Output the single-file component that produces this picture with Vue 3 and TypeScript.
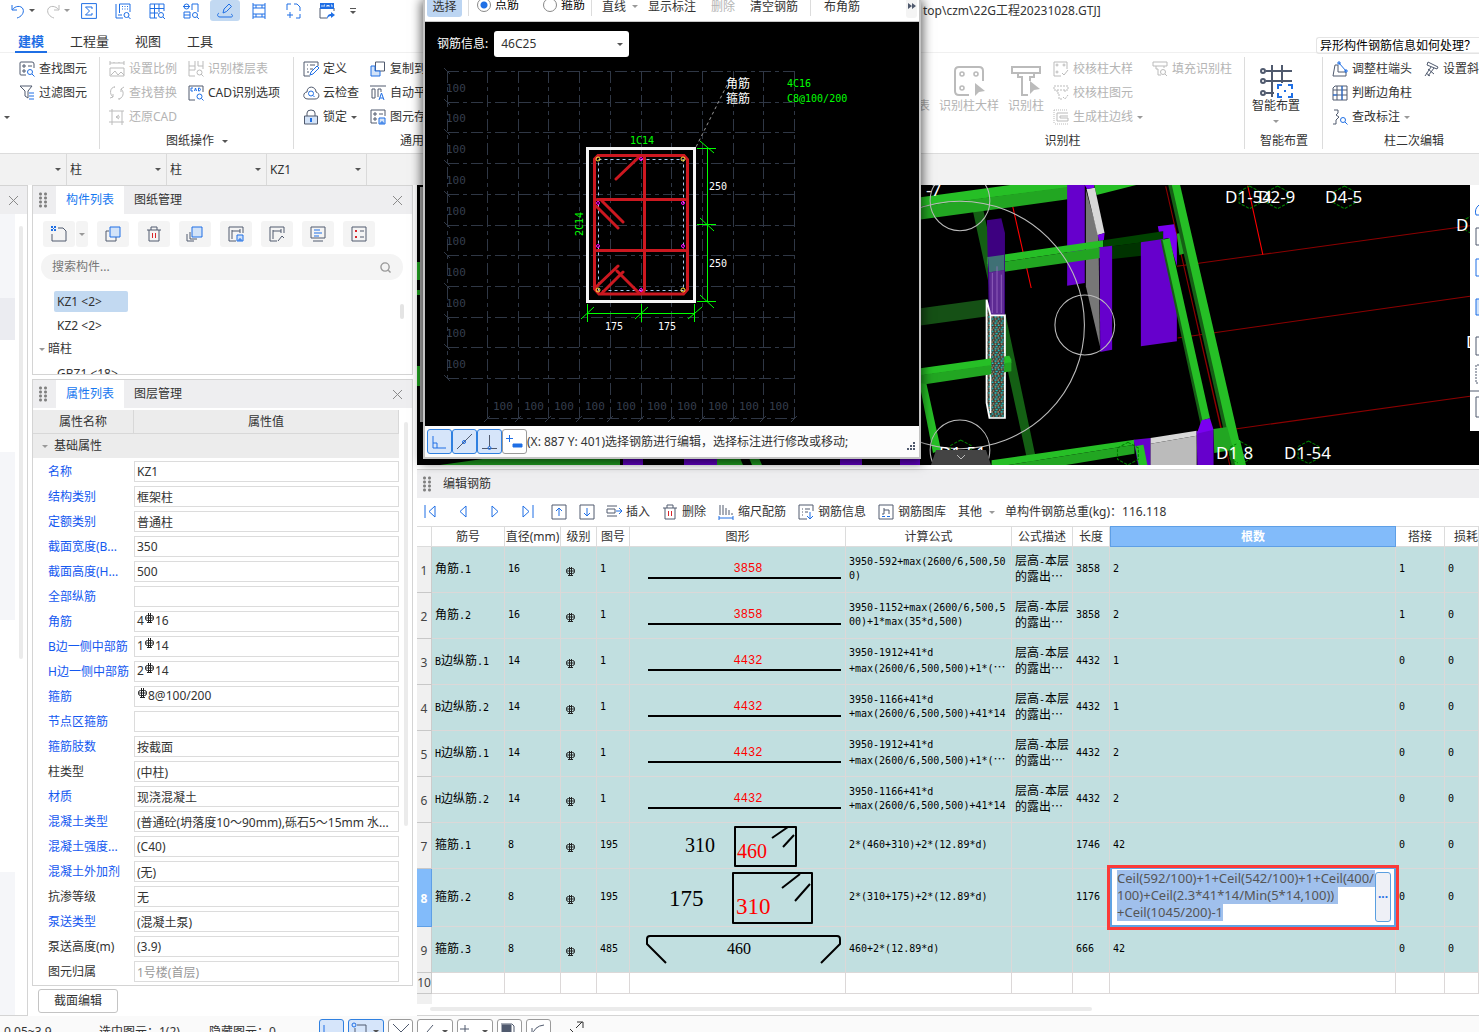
<script setup lang="ts">
import { onMounted, ref } from 'vue'

const icons: Record<string, string> = {
  undo: '<path class="a" d="M2 2v5h5M2.500 6.500C5 3 11 2 13 6c1.500 4-2 8-6 9"/>',
  redo: '<path d="M14 2v5h-5M13.500 6.500C11 3 5 2 3 6c-1.500 4 2 8 6 9"/>',
  sum: '<path class="a" d="M.6.6h14.800v14.800H.6zM11 6V4H4.500l4 4-4 4H11v-2"/>',
  calc: '<path class="a" d="M4.500 1h10.500v8M1 1v14h7M4.500 1v9M3 12h4M7 3.500h1m1.500 0h1m1.500 0h1M7 6h1m1.500 0h1m1.500 0h1"/><circle class="a" cx="11.500" cy="12" r="2.500"/><path class="a" d="M13.500 14l2 2"/>',
  grid: '<path class="a" d="M8 15H1V1h14v7M1 5.500h14M1 10h8M5.500 1v14M10 1v8"/><circle class="a" cx="12" cy="12" r="2.500"/><path class="a" d="M14 14l2 2"/>',
  puzzle: '<circle class="a" cx="3.500" cy="3.500" r="2.500"/><path class="a" d="M9 1h6v8M9 1v6M0 3.500h7M1 9h6v6H1zM1 12h6"/><circle class="a" cx="12" cy="12" r="2.500"/><path class="a" d="M14 14l2 2"/>',
  pen: '<path class="a" d="M6 10l1-4 5-5 2.500 2.500-5 5zM2 10c-2 1-2 4 1 4h11c2 0 2-2 0-3"/>',
  span: '<path class="a" d="M2 0v16M14 0v16M2 2h12M2 5h12M2 11h12M2 14h12M5 2v3m0 6v3M11 2v3m0 6v3"/>',
  newpage: '<path class="a" d="M2 7V1h4M9 1h3l3 3v4M15 11v4h-4M5 9v6M2 12h6"/>',
  igms: '<path d="M8 15H1V5M15 5v3"/><path class="af" d="M1 0h14v6H1z"/><path d="M3 2v2m2 0V2h1m2 2V2l1 1 1-1v2m2-2h1v2" stroke="#fff" stroke-width=".8"/><path class="af" d="M8 16c0-4 2-5 4-5V9l4 3-4 3v-2c-2 0-3 1-4 3z"/>',
  find: '<path d="M7 14H2q-1 0-1-1V2q0-1 1-1h11q2 0 2 2v4M4 4h2v2H4zM4 9h2v2H4zM9 5h4"/><circle class="a" cx="11" cy="11" r="2.500"/><path class="a" d="M13 13l2.500 2.500"/>',
  filter: '<path d="M1 1h12L9 6v7l-3-2V6zM1 1l5 5"/><path class="a" d="M10 8h5M10 11h5M10 14h5"/>',
  scale: '<path d="M1 0v4M15 0v4M1 2h14M1 7h14v8H1zM2 14l4-4 3 4 3-3 3 3M5 2V1m5 1V1"/>',
  floors: '<path d="M1 0v15h6M1 5h6V0M7 5v4M1 9h6M10 0v5h5V0M15 5v3"/><circle cx="11.500" cy="11.500" r="2.500"/><path d="M13 13l2.500 2.500"/>',
  swap: '<path d="M6 2C1 2 0 9 4 12l-3 1M4 12V9M9 14c5 0 7-7 3-10l3-2M12 4v3M5 2h1m4 12h1"/>',
  cad: '<path d="M7 15H1V1h14v6"/><path class="a" d="M5 3H3v3h2M6.500 6l1-3 1 3M10.500 3v3h1q2-1.500 0-3z"/><circle class="a" cx="11.500" cy="11.500" r="2.500"/><path class="a" d="M13.500 13.500l2 2"/>',
  restore: '<path d="M0 2h15M3 0v13h12M0 13h3v3M13 2v11M7 8h4m-4 0l3-2M7 8l3 2M13 13v3"/>',
  define: '<path d="M7 15H1V1h14v4M4 4h1m2 0h5M4 8h1m2 0h3M4 11h2"/><path class="a" d="M7 14l1-3 6-6 2 2-6 6z"/>',
  cloud: '<path d="M5 14C-1 14 0 7 4 7c0-7 9-6 9 0 4 1 4 7-1 7z"/><circle class="a" cx="8" cy="8.500" r="2.500"/><path class="a" d="M10 10.500l1.500 1.500"/>',
  lock: '<path d="M4 7V4q0-3 4-3t4 3v3"/><path class="tint" d="M1.500 7h13v8h-13z"/><path class="a" stroke-width="2" d="M8 9v4"/>',
  copy: '<path d="M5.500 1h9v9h-9z"/><path class="at" d="M5 5H1v10h9v-5H5z"/>',
  align: '<path d="M0 1h16M2 4h3v9H2zM8 12V4h3v3"/><path class="a" d="M9 15l2.500-7L14 15M10 13h3"/>',
  save: '<path d="M7 14H1V1h14v6M4 4h2v2H4zM4 9h2v2H4zM9 5h4"/><path class="at" d="M9 9h6v6H9zM11 15v-2h2v2"/>',
  check: '<path d="M8 15H1V1h13v7" /><circle cx="4" cy="4" r="1"/><circle cx="11" cy="4" r="1"/><circle cx="4" cy="11" r="1"/><path d="M9 12l2 2 4-5"/>',
  checkcol: '<path d="M1 1h14v4H1zM4 5v3h2v6h3M12 5v2M10 12l2 2 3-4" stroke-dasharray="2 1"/>',
  edge: '<path d="M1 1h14M1 1v14M15 15H1" stroke-dasharray="1 1"/><path d="M15 4H4v8h11V9H7V7h8"/>',
  fillcol: '<path d="M1 1h14v4H1zM4 5v3h2v6h3M12 5v2"/><circle cx="11" cy="11" r="2.500"/><path d="M13 13l2 2"/>',
  corner: '<path d="M3 4L1 15h13v-4H6V4z"/><path class="a" d="M7 2l7 8M6 1h2v2H6zM13 9h2v2h-2z"/>',
  sheet: '<path d="M3 1h12v14H1V3zM1 5h14M1 10h14M5 1v14M10 1v14"/><path class="a" d="M10 1v14M1 10h4"/>',
  note: '<path d="M2 1h4v3L4 6l3 2-3 3v4H1"/><circle class="a" cx="11" cy="11" r="2.500"/><path class="a" d="M13 13l2.500 2.500"/>',
  slope: '<path d="M5 1l10 5-1 2L4 4zM8 6l-6 9M11 7l-6 8M5 8l6 5M3 12l4 3"/>',
  bigcheck: '<path d="M8 15H3q-2 0-2-2V3q0-2 2-2h10q2 0 2 2v5"/><circle cx="4.500" cy="4.500" r="1" stroke-width=".8"/><circle cx="11.500" cy="4.500" r="1" stroke-width=".8"/><circle cx="4.500" cy="11.500" r="1" stroke-width=".8"/><path fill="currentColor" d="M11 9l5 4-3 .5-2 2z" stroke="none"/>',
  bigcol: '<path d="M1 1h14v3H1zM4 4v2h2v9h3M12 4v2h-2v2"/><path fill="currentColor" d="M10 8l5 4-3 .5-2 2z" stroke="none"/>',
  smart: '<path d="M3 3h13M3 8h13M3 14h4M6 0v16M11 0v9"/><circle cx="1.500" cy="3" r="1"/><circle cx="1.500" cy="8" r="1"/><circle cx="1.500" cy="14" r="1"/><path class="a" d="M9 12v-2h2M14 10h2v2M16 14v2h-2M11 16H9v-2M12.500 12.500v1"/>',
  create: '<path d="M7 2h5l3 3v10H1V8"/><path class="af" d="M0 0h2v2H0zM3 0h2v2H3zM0 3h2v2H0zM3 3h2v2H3zM2 2h1v1H2z"/>',
  dup: '<path d="M4 5H1v10h10v-4"/><path class="at" d="M5 1h10v10H5z"/>',
  trash: '<path d="M1 4h14M3 4v11h10V4M5 4V1h6v3"/><path class="r" d="M6.500 7v5M9.500 7v5"/>',
  layers: '<path d="M3 6v7h7M0 8v7h7"/><path class="at" d="M5 1h10v10H5z"/>',
  store: '<path d="M8 15H1V1h14v6M4 4v9M4 5h8M12 3v4"/><path class="at" d="M9 9h6v6H9zM11 15v-2h2v2"/>',
  pick: '<path d="M8 15H1V1h14v6M4 4v9M4 5h8M12 3v4M9 15l4-5 2 2"/>',
  lines: '<path d="M1 1h14v11H1zM3 15h10"/><path class="a" d="M4 4h6M4 7h8M4 10h5"/>',
  marks: '<path d="M1 1h14v14H1zM9 5h4M9 11h4"/><path class="r" d="M4 4l2 2m0-2L4 6M4 10l2 2m0-2l-2 2"/>',
  first: '<path class="a" d="M2 1v13M12 2v11L6 7.500z"/>',
  prev: '<path class="a" d="M11 2v11L5 7.500z"/>',
  next: '<path class="a" d="M5 2v11l6-5.500z"/>',
  last: '<path class="a" d="M14 1v13M4 2v11l6-5.500z"/>',
  up: '<path d="M1 1h14v14H1z"/><path class="a" d="M8 12V4M5 7l3-3 3 3"/>',
  down: '<path d="M1 1h14v14H1z"/><path class="a" d="M8 4v8M5 9l3 3 3-3"/>',
  insert: '<path d="M1 2h10M1 12h10M1 5h8v4H1z"/><path class="a" d="M10 7h6M13 4l3 3-3 3"/>',
  ruler: '<path d="M2 1v10M5 1v10M8 4v7M11 6v5M14 9v2"/><path class="a" d="M1 14h14M1 12v4M15 12v4"/>',
  info: '<path d="M9 15H1V1h14v6M4 5h1m2 0h5M4 8h1m2 0h3M4 11h1"/><path class="a" d="M12 8v7M9 12l3 3 3-3"/>',
  lib: '<path d="M1 1h14v14H1zM4 10h2V4M6 6h5v4"/><path class="a" d="M4 12.500h3m2 0h3"/>',
}

const quick = ['sum', 'calc', 'grid', 'puzzle', 'pen', 'span', 'newpage', 'igms']
const tabs = ['建模', '工程量', '视图', '工具']

interface Prop { name: string; value: string; plain?: boolean; bar?: [string, string]; muted?: boolean }
const props: Prop[] = [
  { name: '名称', value: 'KZ1' },
  { name: '结构类别', value: '框架柱' },
  { name: '定额类别', value: '普通柱' },
  { name: '截面宽度(B...', value: '350' },
  { name: '截面高度(H...', value: '500' },
  { name: '全部纵筋', value: '' },
  { name: '角筋', value: '', bar: ['4', '16'] },
  { name: 'B边一侧中部筋', value: '', bar: ['1', '14'] },
  { name: 'H边一侧中部筋', value: '', bar: ['2', '14'] },
  { name: '箍筋', value: '', bar: ['', '8@100/200'] },
  { name: '节点区箍筋', value: '' },
  { name: '箍筋肢数', value: '按截面' },
  { name: '柱类型', value: '(中柱)', plain: true },
  { name: '材质', value: '现浇混凝土' },
  { name: '混凝土类型', value: '(普通砼(坍落度10～90mm),砾石5～15mm 水...' },
  { name: '混凝土强度...', value: '(C40)' },
  { name: '混凝土外加剂', value: '(无)' },
  { name: '抗渗等级', value: '无', plain: true },
  { name: '泵送类型', value: '(混凝土泵)' },
  { name: '泵送高度(m)', value: '(3.9)', plain: true },
  { name: '图元归属', value: '1号楼(首层)', plain: true, muted: true },
]

const listTools = ['dup', 'trash', 'layers', 'store', 'pick', 'lines', 'marks']

interface Row { name: string; dia: string; no: string; shape: string; formula: string; desc: string; len: string; count: string; lap: string }
const desc = '层高-本层\n的露出…'
const rows: Row[] = [
  { name: '角筋.1', dia: '16', no: '1', shape: '3858', formula: '3950-592+max(2600/6,500,50\n0)', desc, len: '3858', count: '2', lap: '1' },
  { name: '角筋.2', dia: '16', no: '1', shape: '3858', formula: '3950-1152+max(2600/6,500,5\n00)+1*max(35*d,500)', desc, len: '3858', count: '2', lap: '1' },
  { name: 'B边纵筋.1', dia: '14', no: '1', shape: '4432', formula: '3950-1912+41*d\n+max(2600/6,500,500)+1*(⋯', desc, len: '4432', count: '1', lap: '0' },
  { name: 'B边纵筋.2', dia: '14', no: '1', shape: '4432', formula: '3950-1166+41*d\n+max(2600/6,500,500)+41*14', desc, len: '4432', count: '1', lap: '0' },
  { name: 'H边纵筋.1', dia: '14', no: '1', shape: '4432', formula: '3950-1912+41*d\n+max(2600/6,500,500)+1*(⋯', desc, len: '4432', count: '2', lap: '0' },
  { name: 'H边纵筋.2', dia: '14', no: '1', shape: '4432', formula: '3950-1166+41*d\n+max(2600/6,500,500)+41*14', desc, len: '4432', count: '2', lap: '0' },
  { name: '箍筋.1', dia: '8', no: '195', shape: 'box', formula: '2*(460+310)+2*(12.89*d)', desc: '', len: '1746', count: '42', lap: '0' },
  { name: '箍筋.2', dia: '8', no: '195', shape: 'bigbox', formula: '2*(310+175)+2*(12.89*d)', desc: '', len: '1176', count: '', lap: '0' },
  { name: '箍筋.3', dia: '8', no: '485', shape: 'hook', formula: '460+2*(12.89*d)', desc: '', len: '666', count: '42', lap: '0' },
]

const segs = (s: string) =>
  (s.match(/[\u4e00-\u9fff…⋯]+|[^\u4e00-\u9fff…⋯]+/g) ?? []).map(t => ({ t, zh: /[\u4e00-\u9fff…⋯]/.test(t) }))

const countText = ref('Ceil(592/100)+1+Ceil(542/100)+1+Ceil(400/\n100)+Ceil(2.3*41*14/Min(5*14,100))\n+Ceil(1045/200)-1')
const countEditor = ref<HTMLTextAreaElement[] | null>(null)
onMounted(() => {
  const el = countEditor.value?.[0]
  el?.focus({ preventScroll: true })
  el?.select()
})

const steps = Array.from({ length: 11 }, (_, i) => i)
const gx = (i: number) => Math.round(487 + i * 30.7)
const gy = (i: number) => Math.round(71 + i * 30.7)
const barDots = [[641, 159], [598, 203], [683, 203], [598, 246], [683, 246], [641, 290]]
const cornerDots = [[598, 159], [683, 159], [598, 290], [683, 290]]
const hexes = [[930, 43], [1008, 43], [1194, 43], [1560, 125], [1094, 808], [905, 810], [127, 805], [592, 812]]
</script>

<template>
  <div class="app" lang="zh-CN">
    <header class="quick">
      <button class="qb" aria-label="撤销"><svg class="ic" viewBox="0 0 16 16" v-html="icons.undo" /></button>
      <i class="caret dark" />
      <button class="qb off redo" aria-label="恢复"><svg class="ic" viewBox="0 0 16 16" v-html="icons.redo" /></button>
      <i class="caret" />
      <div class="qgroup">
        <button v-for="q in quick" :key="q" class="qb wide" :class="{ on: q === 'pen' }" :aria-label="q">
          <svg class="ic" viewBox="0 0 16 16" v-html="icons[q]" />
        </button>
      </div>
      <span class="more"><i class="caret dark" /></span>
      <span class="doc">top\czm\22G工程20231028.GTJ]</span>
    </header>

    <nav class="tabs">
      <a v-for="(t, i) in tabs" :key="t" href="#" :class="{ on: i === 0 }">{{ t }}</a>
      <a href="#" class="ask">异形构件钢筋信息如何处理？</a>
    </nav>

    <section class="ribbon">
      <div class="sec s1">
        <div class="cols">
          <div class="col stub"><button class="cmd" aria-label="更多"><i class="caret dark" /></button></div>
          <div class="col">
            <button class="cmd"><svg class="ic" viewBox="0 0 16 16" v-html="icons.find" />查找图元</button>
            <button class="cmd"><svg class="ic" viewBox="0 0 16 16" v-html="icons.filter" />过滤图元</button>
          </div>
        </div>
      </div>
      <div class="sec s2">
        <div class="cols">
          <div class="col off">
            <button class="cmd"><svg class="ic" viewBox="0 0 16 16" v-html="icons.scale" />设置比例</button>
            <button class="cmd"><svg class="ic" viewBox="0 0 16 16" v-html="icons.swap" />查找替换</button>
            <button class="cmd"><svg class="ic" viewBox="0 0 16 16" v-html="icons.restore" />还原CAD</button>
          </div>
          <div class="col">
            <button class="cmd off"><svg class="ic" viewBox="0 0 16 16" v-html="icons.floors" />识别楼层表</button>
            <button class="cmd"><svg class="ic" viewBox="0 0 16 16" v-html="icons.cad" />CAD识别选项</button>
          </div>
        </div>
        <div class="label">图纸操作<i class="caret dark" /></div>
      </div>
      <div class="sec s3">
        <div class="cols">
          <div class="col">
            <button class="cmd"><svg class="ic" viewBox="0 0 16 16" v-html="icons.define" />定义</button>
            <button class="cmd"><svg class="ic" viewBox="0 0 16 16" v-html="icons.cloud" />云检查</button>
            <button class="cmd"><svg class="ic" viewBox="0 0 16 16" v-html="icons.lock" />锁定<i class="caret dark" /></button>
          </div>
          <div class="col">
            <button class="cmd"><svg class="ic" viewBox="0 0 16 16" v-html="icons.copy" />复制到</button>
            <button class="cmd"><svg class="ic" viewBox="0 0 16 16" v-html="icons.align" />自动平</button>
            <button class="cmd"><svg class="ic" viewBox="0 0 16 16" v-html="icons.save" />图元存</button>
          </div>
        </div>
        <div class="label">通用</div>
      </div>
      <div class="under" />
      <div class="sec s4">
        <div class="cols off">
          <button class="big"><span class="bigtext">表</span></button>
          <button class="big"><svg class="ic" viewBox="0 0 16 16" v-html="icons.bigcheck" />识别柱大样</button>
          <button class="big"><svg class="ic" viewBox="0 0 16 16" v-html="icons.bigcol" />识别柱</button>
          <div class="col">
            <button class="cmd"><svg class="ic" viewBox="0 0 16 16" v-html="icons.check" />校核柱大样</button>
            <button class="cmd"><svg class="ic" viewBox="0 0 16 16" v-html="icons.checkcol" />校核柱图元</button>
            <button class="cmd"><svg class="ic" viewBox="0 0 16 16" v-html="icons.edge" />生成柱边线<i class="caret" /></button>
          </div>
          <div class="col">
            <button class="cmd"><svg class="ic" viewBox="0 0 16 16" v-html="icons.fillcol" />填充识别柱</button>
          </div>
        </div>
        <div class="label">识别柱</div>
      </div>
      <div class="sec s5">
        <div class="cols">
          <button class="big"><svg class="ic" viewBox="0 0 16 16" v-html="icons.smart" />智能布置<i class="caret" /></button>
        </div>
        <div class="label">智能布置</div>
      </div>
      <div class="sec s6">
        <div class="cols">
          <div class="col">
            <button class="cmd"><svg class="ic" viewBox="0 0 16 16" v-html="icons.corner" />调整柱端头</button>
            <button class="cmd"><svg class="ic" viewBox="0 0 16 16" v-html="icons.sheet" />判断边角柱</button>
            <button class="cmd"><svg class="ic" viewBox="0 0 16 16" v-html="icons.note" />查改标注<i class="caret" /></button>
          </div>
          <div class="col">
            <button class="cmd"><svg class="ic" viewBox="0 0 16 16" v-html="icons.slope" />设置斜柱</button>
          </div>
        </div>
        <div class="label">柱二次编辑</div>
      </div>
    </section>

    <section class="filters">
      <label class="pick narrow"><select aria-label="楼层"><option></option></select><i class="caret dark" /></label>
      <label class="pick"><select aria-label="分类"><option>柱</option></select><i class="caret dark" /></label>
      <label class="pick"><select aria-label="类型"><option>柱</option></select><i class="caret dark" /></label>
      <label class="pick"><select aria-label="构件"><option>KZ1</option></select><i class="caret dark" /></label>
    </section>

    <main class="main">
      <aside class="rail">
        <div class="railhead"><button class="close" aria-label="关闭"><svg width="9" height="9" viewBox="0 0 9 9"><path d="M0 0l9 9M9 0L0 9" /></svg></button></div>
        <div class="railbody">
          <div class="blocks"><i class="b1" /><i class="b2" /><i class="b3" /><i class="b1 b4" /><i class="b5" /><i class="b1 b6" /></div>
          <div class="vbar" />
        </div>
      </aside>

      <div class="side">
        <section class="panel list">
          <div class="phead">
            <span class="grip" />
            <a href="#" class="on">构件列表</a><a href="#">图纸管理</a>
            <button class="close" aria-label="关闭"><svg width="9" height="9" viewBox="0 0 9 9"><path d="M0 0l9 9M9 0L0 9" /></svg></button>
          </div>
          <div class="ltools">
            <span class="split">
              <button aria-label="新建"><svg class="ic" viewBox="0 0 16 16" v-html="icons.create" /></button>
              <button class="drop" aria-label="新建选项"><i class="caret" /></button>
            </span>
            <button v-for="t in listTools" :key="t" :aria-label="t"><svg class="ic" viewBox="0 0 16 16" v-html="icons[t]" /></button>
          </div>
          <div class="search">
            <input type="text" placeholder="搜索构件..." aria-label="搜索构件" />
            <svg width="11" height="11" viewBox="0 0 12 12" fill="none" stroke="#999" stroke-width="1.500"><circle cx="5.500" cy="5.500" r="4.500" /><path d="M9 9l2.500 2.500" /></svg>
          </div>
          <div class="treewrap">
            <ul class="tree">
              <li><span class="node sel">KZ1 &lt;2&gt;</span></li>
              <li><span class="node">KZ2 &lt;2&gt;</span></li>
              <li class="parent"><i class="caret" />暗柱</li>
              <li><span class="node">GBZ1 &lt;18&gt;</span></li>
            </ul>
            <div class="mini" />
          </div>
        </section>

        <section class="panel props">
          <div class="phead">
            <span class="grip" />
            <a href="#" class="on">属性列表</a><a href="#">图层管理</a>
            <button class="close" aria-label="关闭"><svg width="9" height="9" viewBox="0 0 9 9"><path d="M0 0l9 9M9 0L0 9" /></svg></button>
          </div>
          <div class="pbody">
            <div class="ptable">
              <div class="prow phd"><span>属性名称</span><span>属性值</span></div>
              <div class="pgroup"><i class="caret" />基础属性</div>
              <div v-for="(p, i) in props" :key="p.name" class="prow">
                <label :for="'p' + i" :class="{ plain: p.plain }">{{ p.name }}</label>
                <div v-if="p.bar" :id="'p' + i" class="field" role="textbox" :aria-label="p.name">
                  {{ p.bar[0] }}<svg class="phi" width="11" height="11" viewBox="0 0 11 11"><rect x="1.500" y="2.500" width="8" height="5" rx="2" /><path d="M4.500 0v10M6.500 0v10M1 5h9M3 9.500h5" /></svg>{{ p.bar[1] }}
                </div>
                <input v-else :id="'p' + i" type="text" :value="p.value" :class="{ muted: p.muted }" />
              </div>
            </div>
            <div class="pbar" />
          </div>
        </section>
        <button class="section-edit">截面编辑</button>
      </div>

      <div class="work">
        <div class="view">
          <svg class="scene" viewBox="417 185 1062 280" preserveAspectRatio="xMinYMin slice">
            <defs>
              <pattern id="mesh" width="17" height="19" patternUnits="userSpaceOnUse">
                <rect width="17" height="19" fill="#3c362e" />
                <path d="M0 3h6M9 9h5M3 15h6" stroke="#22d0d0" stroke-width="4" />
                <path d="M8 3h4M1 9h4M12 16h4" stroke="#b09c7c" stroke-width="4" />
              </pattern>
            </defs>
            <rect x="417" y="185" width="1400" height="280" fill="#000" />
            <g transform="translate(915 183) scale(.3597 .3333)">
              <g fill="none" stroke="#8c0000" stroke-width="3">
                <path d="M728 250L1543 128M730 465L1543 340M890 738L1543 640M697 10L850 735M740 215L875 846" />
                <path stroke="#f00" d="M925 8L967 215M272 72L323 315" />
              </g>
              <path fill="#145f14" d="M150 30h30L340 846h-25z" />
              <path fill="#26bf26" d="M0 45L265 6H425V14L0 72z" />
              <path fill="#22a622" d="M0 72L425 12V49L0 112z" />
              <path fill="#26bf26" d="M498 6H615L505 36z" />
              <path fill="#6600cc" d="M423 6H472V300L423 308z" />
              <path fill="#777" d="M475 20L510 155L514 490L475 310z" />
              <path fill="#d8d8d8" d="M477 18L500 14L527 150L508 156z" />
              <path fill="#7a00f0" d="M472 6H498V14L478 18zM508 156L527 150L525 172L512 174z" />
              <path fill="#26bf26" d="M200 222L523 172V192L200 244z" />
              <path fill="#22a622" d="M200 244L523 192L515 225L248 266H205z" />
              <path fill="#004200" d="M523 172L690 145V170L548 190L523 192z" />
              <path fill="#003300" d="M548 190L630 178V218L548 228z" />
              <path fill="#6600cc" d="M513 193L548 188V500L515 507z" />
              <path fill="#6600cc" d="M628 178L690 168L728 330V475L628 490z" />
              <path fill="#7a00f0" d="M675 130L720 124L728 160V250L705 165L690 168V145L678 146z" />
              <path fill="#22a622" d="M728 152L746 148L754 210L735 216z" />
              <path fill="#156015" d="M683 172L692 168L808 706L797 740z" />
              <path fill="#26bf26" d="M688 170L708 166L820 706L799 712z" />
              <path fill="#156015" d="M704 6H716L898 846H880z" />
              <path fill="#26bf26" d="M714 6H737L917 846H890z" />
              <path fill="#155015" d="M0 378L202 348V400L0 430z" />
              <path fill="#3d0080" d="M200 112L240 106L250 150V395H205z" />
              <path fill="#3f7075" d="M203 222L248 215V262L206 268z" />
              <path fill="#5d2a93" d="M206 268L248 262V395H208z" />
              <path stroke="#a777cc" stroke-width="2" d="M215 270V390M228 250V390M240 275V390" />
              <path fill="url(#mesh)" stroke="#fff" stroke-width="5" d="M199 350L210 397H250V705H207L199 660z" />
              <path stroke="#fff" stroke-width="4" d="M210 397V690" />
              <path fill="#26bf26" d="M0 558L262 518L268 530V540L0 580z" />
              <path fill="#22a622" d="M0 578L268 538V565L33 603L0 608z" />
              <path fill="#26bf26" d="M12 600L32 603L72 800L50 810z" />
              <path fill="url(#mesh)" d="M212 510H248V580H212z" />
              <path fill="#26bf26" d="M213 832L610 770V785L260 846H213z" />
              <path fill="#22a622" d="M260 846L610 785V812L420 846z" />
              <path fill="#6600cc" d="M608 770L655 765V846H620z" />
              <path fill="#26bf26" d="M612 790L635 785L646 846H622z" />
              <path fill="#d8d8d8" d="M655 765L783 743V758L655 782z" />
              <path fill="#bbb" d="M655 782L783 758V846H655z" />
              <path fill="#6600cc" d="M783 745L830 738V846H785z" />
              <path fill="#7a00f0" d="M797 712L820 706L830 740L783 752z" />
              <path fill="#22a622" d="M830 738L868 732L885 800L832 810z" />
              <g fill="none" stroke="#bbb" stroke-width="3">
                <ellipse cx="125" cy="53" rx="83" ry="90" /><ellipse cx="472" cy="426" rx="83" ry="90" />
                <ellipse cx="125" cy="801" rx="83" ry="90" /><ellipse cx="125" cy="426" rx="346" ry="371" />
              </g>
              <path v-for="(h, i) in hexes" :key="i" fill="none" stroke="#008000" stroke-width="3" stroke-dasharray="9 4" :transform="`translate(${h[0]} ${h[1]})`" d="M0-34L29-17V17L0 34L-29 17V-17z" />
            </g>
            <g class="axis">
              <text x="1225" y="203">D1-54</text><text x="1258" y="203">D2-9</text><text x="1325" y="203">D4-5</text>
              <text x="1456" y="231">D</text><text x="1466" y="348">D</text><text x="926" y="196">-7</text>
              <text x="1284" y="459">D1-54</text><text x="1216" y="459">D1-8</text><text x="939" y="459">D1-51</text>
            </g>
            <path fill="#26bf26" d="M1236 440h4l6 25h-8z" />
            <path fill="#444" d="M931 465l5-15h50l5 15z" /><path d="M957 455l4 4 4-4" fill="none" stroke="#bbb" />
            <path fill="#22a622" d="M440 465l50-7h130v7zM700 458h40l3 7h-40zM749 458h10l3 7h-10zM417 262h3v18h-3zM417 290h3v5h-3zM417 366h3v20h-3z" />
            <path fill="#6600cc" d="M623 458h20v7h-20zM684 458h33v7h-33zM840 458h22v7h-22zM900 458h20v7h-20z" />
            <path fill="#b5b5b5" d="M420 187h4v235h-4z" />
          </svg>
          <div class="vtools">
            <svg width="9" height="246" viewBox="0 0 9 246" fill="none" stroke="#505a6e">
              <path stroke="#1f6fe5" d="M9 20q-5 4-3 10h3M9 74H6v17h3" /><path d="M9 43H6v17h3M9 152H6v18h3M0 206h9M9 212H6v20h3" />
              <path d="M9 180H6v18h3" stroke-dasharray="2 1" /><path fill="#cfe2fa" stroke="#1f6fe5" d="M9 114H6v16h3" />
            </svg>
          </div>
        </div>

        <section class="editor">
          <div class="ehead"><span class="grip" />编辑钢筋</div>
          <div class="etools">
            <button v-for="n in ['first', 'prev', 'next', 'last']" :key="n" class="nav" :aria-label="n"><svg class="ic" viewBox="0 0 16 16" v-html="icons[n]" /></button>
            <button class="mv" aria-label="上移"><svg class="ic" viewBox="0 0 16 16" v-html="icons.up" /></button>
            <button class="mv" aria-label="下移"><svg class="ic" viewBox="0 0 16 16" v-html="icons.down" /></button>
            <button class="et"><svg class="ic" viewBox="0 0 16 16" v-html="icons.insert" />插入</button>
            <button class="et"><svg class="ic" viewBox="0 0 16 16" v-html="icons.trash" />删除</button>
            <button class="et"><svg class="ic" viewBox="0 0 16 16" v-html="icons.ruler" />缩尺配筋</button>
            <button class="et"><svg class="ic" viewBox="0 0 16 16" v-html="icons.info" />钢筋信息</button>
            <button class="et"><svg class="ic" viewBox="0 0 16 16" v-html="icons.lib" />钢筋图库</button>
            <button class="et other">其他<i class="caret" /></button>
            <span>单构件钢筋总重(kg)：116.118</span>
          </div>
          <table class="bars">
            <colgroup>
              <col class="c0" /><col class="c1" /><col class="c2" /><col class="c3" /><col class="c4" /><col class="c5" />
              <col class="c6" /><col class="c7" /><col class="c8" /><col class="c9" /><col class="c10" /><col />
            </colgroup>
            <thead>
              <tr>
                <th></th><th>筋号</th><th>直径(mm)</th><th>级别</th><th>图号</th><th>图形</th><th>计算公式</th><th>公式描述</th><th>长度</th>
                <th class="hot">根数</th><th>搭接</th><th>损耗</th>
              </tr>
            </thead>
            <tbody>
              <tr v-for="(r, i) in rows" :key="r.name" :class="{ tall: i === 7 }">
                <th scope="row">{{ i + 1 }}</th>
                <td><span v-for="(s, k) in segs(r.name)" :key="k" :class="{ zh: s.zh }">{{ s.t }}</span></td>
                <td>{{ r.dia }}</td>
                <td class="mid"><svg class="phi" width="11" height="11" viewBox="0 0 11 11"><rect x="1.500" y="2.500" width="8" height="5" rx="2" /><path d="M4.500 1v9M6.500 1v9M1 5h9M3 9.500h5" /></svg></td>
                <td>{{ r.no }}</td>
                <td class="shape">
                  <svg v-if="r.shape === 'box'" width="215" height="45" viewBox="0 0 215 45">
                    <path d="M105 4h61v39h-61zM142 15l16-11M164 12l-11 12" />
                    <text class="s20" x="55" y="29">310</text><text class="s20 red" x="107" y="35">460</text>
                  </svg>
                  <svg v-else-if="r.shape === 'bigbox'" width="215" height="57" viewBox="0 0 215 57">
                    <path d="M103 4h79v50h-79zM152 19l18-14M180 15l-15 17" />
                    <text class="s23" x="39" y="37">175</text><text class="s23 red" x="106" y="45">310</text>
                  </svg>
                  <svg v-else-if="r.shape === 'hook'" width="215" height="45" viewBox="0 0 215 45">
                    <path d="M36 36L17 17v-5q0-3 3-3h187q3 0 3 3v5L191 36" />
                    <text class="s16" x="97" y="27">460</text>
                  </svg>
                  <svg v-else width="215" height="45" viewBox="0 0 215 45">
                    <path d="M18 31h193" /><text class="len" x="118" y="25">{{ r.shape }}</text>
                  </svg>
                </td>
                <td><span v-for="(s, k) in segs(r.formula)" :key="k" :class="{ zh: s.zh }">{{ s.t }}</span></td>
                <td><span v-for="(s, k) in segs(r.desc)" :key="k" :class="{ zh: s.zh }">{{ s.t }}</span></td>
                <td>{{ r.len }}</td>
                <td v-if="i === 7" class="edit">
                  <div class="cell-editor">
                    <div class="inner">
                      <textarea ref="countEditor" v-model="countText" aria-label="根数" spellcheck="false" />
                      <button aria-label="更多">···</button>
                    </div>
                  </div>
                </td>
                <td v-else>{{ r.count }}</td>
                <td>{{ r.lap }}</td>
                <td>0</td>
              </tr>
              <tr class="blank"><th scope="row">10</th><td v-for="n in 11" :key="n"></td></tr>
            </tbody>
          </table>
          <div class="tail" />
          <div class="hbar" />
        </section>
      </div>
    </main>

    <footer class="status">
      <span class="st1">0.05~3.9</span><span class="st2">选中图元：1(2)</span><span class="st3">隐藏图元：0</span>
      <div class="sbtns">
        <button class="on" aria-label="正交"><svg width="24" height="24" viewBox="0 0 24 24"><path class="blue" d="M4 5v12h14" /></svg></button>
        <button class="on w" aria-label="捕捉"><svg width="24" height="24" viewBox="0 0 24 24"><path d="M8 5h9v12M6 8v9" /><circle class="blue" cx="5" cy="5" r="2" /></svg><i class="caret dark" /></button>
        <button aria-label="交点"><svg width="24" height="24" viewBox="0 0 24 24"><path d="M4 4l8 8 8-8M12 12v6" /></svg></button>
        <button class="w" aria-label="点"><svg width="24" height="24" viewBox="0 0 24 24"><path d="M15 5l-6 7" /></svg><i class="caret dark" /></button>
        <button class="w" aria-label="偏移"><svg width="24" height="24" viewBox="0 0 24 24"><path d="M7 5v10M2 9h9" /></svg><i class="caret dark" /></button>
        <button aria-label="图层"><svg width="24" height="24" viewBox="0 0 24 24"><path fill="#505a6e" d="M4 5h9v12H4z" /><path d="M3 4h11l2 2v10" /></svg></button>
        <button aria-label="弧线"><svg width="24" height="24" viewBox="0 0 24 24"><path d="M5 16q2-10 12-11M5 16V8" /></svg></button>
      </div>
      <svg class="expand" width="16" height="16" viewBox="0 0 16 16" fill="none" stroke="#333"><path d="M7 9l6-6M8 3h6v6M1 10l3 3" /></svg>
    </footer>

    <section class="dialog" role="dialog" aria-label="截面编辑">
      <div class="dtools">
        <button class="sel">选择</button>
        <i class="sep" />
        <label class="radio"><input type="radio" name="mode" checked />点筋</label>
        <label class="radio r2"><input type="radio" name="mode" />箍筋</label>
        <i class="sep s2" />
        <button class="line">直线<i class="caret" /></button>
        <button>显示标注</button>
        <button class="off">删除</button>
        <button>清空钢筋</button>
        <i class="sep s3" />
        <button>布角筋</button>
        <button class="ff" aria-label="更多"><svg width="8" height="6" viewBox="0 0 8 6"><path fill="#505a6e" d="M0 0l4 3-4 3zM4 0l4 3-4 3z" /></svg></button>
      </div>
      <div class="canvas">
        <svg class="draw" viewBox="425 22 494 404" preserveAspectRatio="xMinYMin meet">
          <g stroke="#2f3745" fill="none" stroke-dasharray="12 4 4 4">
            <path v-for="i in steps" :key="'h' + i" :d="`M447 ${gy(i)}.5H795`" />
            <path v-for="i in steps" :key="'v' + i" :d="`M${gx(i)}.5 71V421`" />
            <path d="M447.500 71V378M487 418.500H796" />
          </g>
          <g stroke="#2f3745">
            <path v-for="i in steps" :key="'a' + i" :d="`M444 ${gy(i) - 3}l6 6`" />
            <path v-for="i in steps" :key="'b' + i" :d="`M${gx(i) - 3} 422l6-6`" />
          </g>
          <g class="gtext">
            <text v-for="i in 10" :key="'l' + i" x="446" :y="gy(i) - 10">100</text>
            <text v-for="i in 10" :key="'m' + i" :x="gx(i - 1) + 6" y="410">100</text>
          </g>
          <path d="M727 85L696 147" stroke="#999" stroke-dasharray="3 3" />
          <rect x="587.500" y="148.500" width="107" height="153" fill="none" stroke="#f4f4f4" stroke-width="3" />
          <rect x="598.500" y="159.500" width="85" height="131" fill="none" stroke="#a8c8ee" stroke-dasharray="3 3" />
          <g fill="none" stroke="#cc1820" stroke-width="3" stroke-linecap="round">
            <path d="M598 155.500h86l3.500 4v130l-4 4.500H599l-4.500-5V159zM644.500 157v133l-3 4M597 199.500h88M597 250.500h88" />
            <path d="M616 179l23-22M596 206l22 22M602 201l21 21M596 287l22-21M602 293l21-21M617 271l22 22" />
          </g>
          <circle v-for="d in barDots" :key="d.join()" :cx="d[0]" :cy="d[1]" r="1.500" fill="none" stroke="#f0f" />
          <circle v-for="d in cornerDots" :key="d.join()" :cx="d[0]" :cy="d[1]" r="2" fill="none" stroke="#ffe040" />
          <path fill="none" stroke="#0f0" d="M707.500 148v154M697 148.500h19M697 224.500h19M697 301.500h19M700 141l14 12M700 218l14 13M700 295l14 13M587 313.500h108M587.500 304v18M641.500 304v18M694.500 304v18M581 319l13-12M635 319l13-12M688 319l14-12" />
          <g class="dim">
            <text x="709" y="190">250</text><text x="709" y="267">250</text><text x="605" y="330">175</text><text x="658" y="330">175</text>
            <text class="zh" x="726" y="88">角筋</text><text class="zh" x="726" y="103">箍筋</text>
            <g fill="#0f0"><text x="787" y="87">4C16</text><text x="787" y="102">C8@100/200</text><text x="630" y="144">1C14</text><text transform="translate(583 236) rotate(-90)">2C14</text></g>
          </g>
        </svg>
        <div class="barinfo">
          <label for="barinfo">钢筋信息:</label>
          <span class="combo"><select id="barinfo"><option>46C25</option></select><i class="caret dark" /></span>
        </div>
      </div>
      <div class="dstatus">
        <button class="on" aria-label="正交"><svg width="24" height="24" viewBox="0 0 24 24"><path class="blue" d="M5 6v12h13M5 13h4v5" /></svg></button>
        <button class="on" aria-label="斜线"><svg width="24" height="24" viewBox="0 0 24 24"><path d="M4 19L19 4" /><circle class="blue" cx="11" cy="12" r="1.500" /></svg></button>
        <button class="on" aria-label="垂足"><svg width="24" height="24" viewBox="0 0 24 24"><path d="M11.500 5v12M4 18.500h15" /><circle class="blue" cx="11.500" cy="18" r="1.500" /></svg></button>
        <button aria-label="输入"><svg width="24" height="24" viewBox="0 0 24 24"><path class="blue" d="M6.500 5v7M3 8.500h7" /><path class="blue" fill="#1f6fe5" d="M10 14h9v3h-9z" /></svg></button>
        <span>(X: 887 Y: 401)选择钢筋进行编辑，选择标注进行修改或移动;</span>
        <svg class="size" width="10" height="9" viewBox="0 0 10 9" fill="#505a6e"><path d="M6 0h2v2H6zM3 3h2v2H3zM6 3h2v2H6zM0 6h2v2H0zM3 6h2v2H3zM6 6h2v2H6z" /></svg>
      </div>
    </section>
  </div>
</template>

<style>
html, body { margin: 0; overflow: hidden; }
.ic { --acc: #1f6fe5; width: 16px; height: 16px; flex: none; fill: none; stroke: #505a6e; overflow: visible; }
.off .ic { --acc: #bbb; stroke: #bbb; color: #bbb; }
.ic .a { stroke: var(--acc); }
.ic .af { fill: var(--acc); stroke: none; }
.ic .at { stroke: var(--acc); fill: #d3e3f8; }
.ic .tint { fill: #d3e3f8; }
.ic .r { stroke: #d8262c; }
</style>

<style scoped>
.app {
  position: relative; display: flex; flex-direction: column; height: 100vh; overflow: hidden; background: #fff;
  font: 12px/16px "Noto Sans", "Noto Sans CJK SC", sans-serif; color: #333;
}
.app *, .app *::before { box-sizing: border-box; }
button, input, select, textarea { font: inherit; color: inherit; margin: 0; padding: 0; border: 0; background: none; outline: none; border-radius: 0; }
button { display: inline-flex; align-items: center; white-space: nowrap; }
a { color: inherit; text-decoration: none; }
select { appearance: none; }
.caret { flex: none; width: 0; height: 0; border: 3px solid transparent; border-top: 3px solid #999; border-bottom: 0; }
.caret.dark { border-top-color: #555; }
.off { color: #b4b4b4; }

.quick { display: flex; align-items: center; height: 21px; padding-left: 10px; white-space: nowrap; flex: none; }
.qb { width: 16px; height: 21px; justify-content: center; }
.qb + .caret { margin-left: 3px; }
.redo { margin-left: 10px; }
.qgroup { display: flex; margin-left: 2px; }
.qb.wide { width: 30px; margin: 0 2px; border-radius: 3px; }
.qb.on { background: #c2d9f2; }
.more { display: flex; align-items: flex-end; height: 6px; margin-left: 6px; border-top: 1px solid #555; }
.doc { margin-left: 567px; }

.tabs { display: flex; height: 32px; flex: none; padding-left: 15px; border-bottom: 1px solid #f0f0f0; font-size: 13px; white-space: nowrap; }
.tabs a { height: 32px; padding: 11px 3px 0; line-height: 18px; margin-right: 20px; }
.tabs a.on { color: #1f6fe5; font-weight: bold; border-bottom: 2px solid #1f6fe5; }
.tabs .ask { margin: 16px 0 0 auto; height: 17px; line-height: 15px; padding: 0 3px; border: 1px solid #e4e4e4; border-right: 0; border-radius: 3px 0 0 3px; color: #000; font-size: 12px; }

.ribbon { display: flex; height: 101px; flex: none; border-bottom: 1px solid #dcdcdc; padding-top: 4px; overflow: hidden; }
.sec { position: relative; flex: none; display: flex; flex-direction: column; }
.sec::after { content: ""; position: absolute; right: 0; top: 0; width: 1px; height: 92px; background: #dcdcdc; }
.s1 { width: 100px; }
.s2 { width: 194px; }
.s3 { width: 236px; }
.s4 { width: 365px; }
.s5 { width: 78px; }
.s6 { width: 182px; }
.s3::after, .s6::after { display: none; }
.under { flex: 0 0 350px; }
.cols { display: flex; height: 72px; gap: 11px; padding-left: 9px; }
.s1 .cols { padding: 0; gap: 0; }
.s4 .cols { justify-content: flex-end; gap: 9px; padding-right: 13px; }
.s5 .cols { padding-left: 7px; }
.col { display: flex; flex-direction: column; align-items: flex-start; }
.stub { width: 19px; padding: 48px 0 0 4px; }
.cmd { height: 24px; gap: 4px; }
.label { display: flex; height: 24px; align-items: center; justify-content: center; gap: 8px; }
.big { flex-direction: column; padding-top: 8px; height: 72px; }
.big .ic { width: 32px; height: 32px; margin-bottom: 1px; }
.big .caret { margin-top: 6px; }
.bigtext { padding-top: 33px; }

.filters { display: flex; height: 31px; flex: none; background: #f2f2f2; }
.pick { position: relative; width: 100px; border-right: 1px solid #dadada; display: flex; }
.pick.narrow { width: 67px; }
.pick select { width: 100%; padding-left: 3px; }
.pick .caret { position: absolute; right: 5px; top: 14px; }

.main { display: flex; flex: 1; min-height: 0; background: #fff; gap: 4px; }
.rail { width: 28px; flex: none; border: 1px solid #d4d4d4; border-left: 0; display: flex; flex-direction: column; }
.railhead { height: 28px; background: #eeeef0; display: flex; justify-content: center; }
.close { justify-content: center; }
.close svg { stroke: #8a8a8a; }
.railbody { display: flex; flex: 1; gap: 4px; }
.blocks { width: 15px; display: flex; flex-direction: column; }
.b1 { height: 84px; background: #f5f6f9; }
.b2 { height: 42px; background: #ebecf1; }
.b3 { height: 112px; }
.b4 { height: 168px; }
.b5 { height: 252px; }
.b6 { flex: 1; }
.vbar { width: 4px; height: 433px; margin-top: 12px; border-radius: 2px; background: #ebebeb; }

.side { width: 381px; flex: none; display: flex; flex-direction: column; align-items: flex-start; }
.panel { width: 100%; border: 1px solid #d4d4d4; display: flex; flex-direction: column; overflow: hidden; }
.list { height: 190px; flex: none; margin-bottom: 4px; }
.props { flex: 1; min-height: 0; margin-bottom: 3px; }
.phead { display: flex; height: 28px; flex: none; background: #eeeef0; align-items: stretch; padding-right: 10px; }
.phead a { padding: 6px 10px 0; }
.phead a.on { background: #fff; color: #1677f0; }
.phead .close { margin-left: auto; }
.grip { width: 10px; height: 16px; margin: 6px 8px 0 5px; background: radial-gradient(circle, #808080 1px, transparent 2px) 0 0 / 5px 4px; flex: none; }
.ltools { display: flex; gap: 9px; padding: 7px 0 0 10px; }
.ltools button { width: 32px; height: 26px; justify-content: center; background: #f4f4f4; border-radius: 3px; }
.split { display: flex; gap: 1px; }
.ltools .drop { width: 12px; }
.search { display: flex; align-items: center; height: 26px; margin: 7px 9px 0 8px; padding: 0 12px 0 11px; background: #f4f4f4; border-radius: 13px; }
.search input { flex: 1; }
.search input::placeholder { color: #777; }
.treewrap { position: relative; flex: 1; overflow: hidden; padding-top: 9px; }
.tree { margin: 0; padding: 0; list-style: none; }
.tree li { height: 24px; display: flex; align-items: center; padding-left: 21px; white-space: pre; }
.tree .parent { padding-left: 6px; gap: 3px; }
.node { height: 21px; line-height: 21px; width: 74px; padding-left: 3px; white-space: pre; }
.sel { background: #c2d9f1; border-radius: 2px; }
.mini { position: absolute; right: 8px; top: 24px; width: 4px; height: 15px; border-radius: 2px; background: #e4e4e4; }

.pbody { display: flex; gap: 5px; flex: 1; min-height: 0; }
.ptable { width: 366px; padding-top: 2px; }
.prow { display: flex; align-items: center; height: 25px; }
.prow label { width: 101px; padding-left: 15px; color: #1458f0; white-space: nowrap; }
.prow label.plain { color: #333; }
.prow input, .field { width: 265px; height: 21px; border: 1px solid #dcdcdc; padding-left: 2px; }
.field { line-height: 18px; }
.muted { color: #999; }
.phd { height: 24px; background: #ececec; border-bottom: 1px solid #d8d8d8; text-align: center; }
.phd span { width: 101px; border-right: 1px solid #d8d8d8; line-height: 23px; }
.phd span + span { width: 265px; }
.pgroup { display: flex; align-items: center; gap: 6px; height: 24px; margin-bottom: 1px; padding-left: 9px; background: #ececec; }
.pbar { width: 4px; height: 404px; margin-top: 14px; border-radius: 2px; background: #ebebeb; }
.phi { fill: none; stroke: #222; stroke-width: 1px; }
.field .phi { margin-bottom: 1px; }
.section-edit { width: 80px; height: 24px; margin: 0 0 3px 6px; justify-content: center; border: 1px solid #c4c4c4; border-radius: 3px; flex: none; }

.work { flex: 1; min-width: 0; display: flex; flex-direction: column; gap: 4px; }
.view { position: relative; height: 280px; flex: none; overflow: hidden; background: #000; }
.scene { display: block; width: 100%; height: 280px; }
.axis { fill: #fff; font-size: 17px; }
.vtools { position: absolute; right: 0; top: 0; width: 9px; height: 246px; background: #fff; }
.editor { flex: 1; min-height: 0; border: 1px solid #d4d4d4; border-right: 0; border-left: 0; overflow: hidden; display: flex; flex-direction: column; }
.ehead { display: flex; align-items: center; height: 28px; background: #eeeef0; flex: none; }
.ehead .grip { margin: 0 11px 0 5px; }
.etools { display: flex; align-items: center; height: 28px; flex: none; padding-left: 6px; white-space: nowrap; }
.nav { margin-right: 16px; }
.mv { margin-right: 12px; }
.mv + .mv { margin-right: 11px; }
.et { gap: 4px; margin-right: 12px; }
.et .caret { margin-left: 3px; }
.other { margin-right: 10px; }
.bars { width: 100%; table-layout: fixed; border-collapse: separate; border-spacing: 0; flex: none; }
.c0 { width: 15px; } .c1 { width: 73px; } .c2 { width: 56px; } .c3 { width: 36px; } .c4 { width: 33px; } .c5 { width: 216px; }
.c6 { width: 166px; } .c7 { width: 61px; } .c8 { width: 37px; } .c9 { width: 286px; } .c10 { width: 49px; }
.bars th { font-weight: normal; padding: 0; }
.bars thead th { height: 21px; border-right: 1px solid #dcdcdc; border-bottom: 1px solid #dcdcdc; border-top: 1px solid #dcdcdc; white-space: nowrap; }
.bars thead th:last-child { text-align: left; padding-left: 9px; }
.bars thead .hot { background: #82bbfa; border: 1px solid #5e9fe6; color: #fff; font-weight: bold; }
.bars tbody th { background: #f0f0f0; border-bottom: 1px solid #c8c8c8; border-right: 1px solid #ccc; color: #444; padding-top: 2px; }
.bars td { height: 46px; padding: 0 0 2px 3px; background: #c1dfe0; border-right: 1px solid #dcd8d8; border-bottom: 1px solid #dcd8d8; font: 10px/14px "DejaVu Sans Mono", "Liberation Mono", monospace; color: #000; white-space: pre; }
.bars .zh { font: 12px/14px "Noto Sans CJK SC", sans-serif; }
.bars .tall td { height: 58px; }
.bars .tall th { background: #82bbfa; color: #fff; font-weight: bold; border-color: #5e9fe6; }
.bars .mid { padding: 4px 0 0 4px; }
.mid .phi { display: block; }
.bars .blank td { height: 21px; background: #fff; padding: 0; }
.bars .blank th { padding: 0; }
.bars .shape { padding: 0; }
.shape svg { display: block; fill: none; stroke: #000; stroke-width: 2px; stroke-linejoin: round; stroke-linecap: butt; }
.shape text { stroke: none; fill: #000; font-family: "Liberation Serif", serif; }
.shape .s16 { font-size: 16px; }
.shape .s20 { font-size: 20px; }
.shape .s23 { font-size: 23px; }
.shape .red { fill: #f00; }
.shape .len { fill: #f00; font: 12px "Liberation Mono", monospace; text-anchor: middle; }
.bars .edit { position: relative; padding: 0; }
.cell-editor { position: absolute; left: -3px; right: -4px; top: -4px; bottom: -4px; border: 3px solid #fb3a38; z-index: 1; }
.inner { display: flex; align-items: center; height: 100%; border: 2px solid #5fa3e3; border-top: 1px solid #5fa3e3; background: #fff; padding-right: 3px; }
.inner textarea { flex: 1; min-width: 0; height: 54px; padding: 0 0 0 5px; resize: none; overflow: hidden; white-space: pre; font: 13px/17px "Noto Sans", sans-serif; color: #555; caret-color: transparent; }
.inner textarea::selection { background: #a0c0ec; color: #555; }
.inner button { width: 16px; height: 50px; justify-content: center; border: 1px solid #5a9fe0; border-radius: 3px; background: #eef0f6; color: #1f6fe5; font: bold 12px/16px "Noto Sans", sans-serif; }
.tail { width: 15px; height: 10px; flex: none; background: #f0f0f0; }
.hbar { width: 662px; height: 4px; margin: 3px 0 0 13px; flex: none; border-radius: 2px; background: #ebebeb; }

.status { height: 16px; flex: none; overflow: hidden; display: flex; align-items: flex-start; padding-top: 3px; background: #fafafa; line-height: 25px; white-space: nowrap; }
.st1 { width: 99px; padding-left: 4px; }
.st2 { width: 110px; }
.st3 { width: 110px; }
.sbtns { display: flex; gap: 4px; }
.sbtns button, .dstatus button { position: relative; width: 25px; height: 25px; border: 1px solid #9a9a9a; border-radius: 3px; background: #fff; flex: none; }
.sbtns .w { width: 36px; }
.sbtns .on, .dstatus .on { background: #d6e5fa; border-color: #2f80e0; }
.sbtns svg, .dstatus button svg { fill: none; stroke: #505a6e; flex: none; }
.sbtns .blue, .dstatus .blue { stroke: #1f6fe5; }
.expand { margin-left: 18px; }

.dialog { position: absolute; left: 423px; top: 0; width: 498px; border: 2px solid #c4c4c4; border-top: 0; background: #fff; box-shadow: 0 2px 10px 2px rgba(0, 0, 0, .6); }
.dtools { display: flex; height: 22px; padding-left: 2px; border-bottom: 1px solid #c8c8c8; align-items: flex-start; overflow: hidden; white-space: nowrap; }
.dtools button { height: 20px; margin-right: 15px; padding-bottom: 7px; }
.dtools .sel { width: 35px; height: 17px; margin-right: 6px; padding-bottom: 4px; justify-content: center; background: #bcd5f2; border-radius: 0 0 3px 3px; }
.sep { width: 1px; height: 16px; background: #dcdcdc; margin-right: 8px; }
.radio { display: flex; align-items: center; gap: 4px; height: 12px; color: #000; margin: -1px 24px 0 0; }
.radio.r2 { margin-right: 6px; }
.radio input { appearance: none; width: 14px; height: 14px; border: 1px solid #888; border-radius: 50%; background: #fff; }
.radio input:checked { background: radial-gradient(circle, #1f6fe5 3px, #fff 4px); }
.dtools .line { gap: 6px; margin-right: 10px; }
.dtools button.ff { width: 11px; height: 18px; margin: 0 2px 0 auto; padding-bottom: 6px; justify-content: center; background: #f4f4f4; border-radius: 0 0 3px 3px; }
.dtools .s2 { width: 1px; margin-right: 10px; }
.dtools .s3 { width: 1px; margin: 0 13px 0 -3px; }
.canvas { position: relative; background: #000; height: 404px; }
.draw { display: block; width: 100%; height: 404px; }
.gtext { fill: #353e4d; font: 11px "DejaVu Sans Mono", "Liberation Mono", monospace; }
.dim { fill: #fff; font: 10px "DejaVu Sans Mono", monospace; }
.dim .zh { font: 12px "Noto Sans CJK SC", sans-serif; }
.barinfo { position: absolute; left: 12px; top: 9px; display: flex; align-items: center; gap: 6px; color: #fff; }
.combo { position: relative; display: flex; }
.combo select { width: 135px; height: 26px; padding-left: 7px; background: #fff; border-radius: 3px; color: #333; }
.combo .caret { position: absolute; right: 6px; top: 12px; }
.dstatus { display: flex; align-items: center; height: 31px; padding-left: 2px; white-space: nowrap; background: #fcfcfc; }
.size { margin: 10px 2px 0 auto; }
</style>
